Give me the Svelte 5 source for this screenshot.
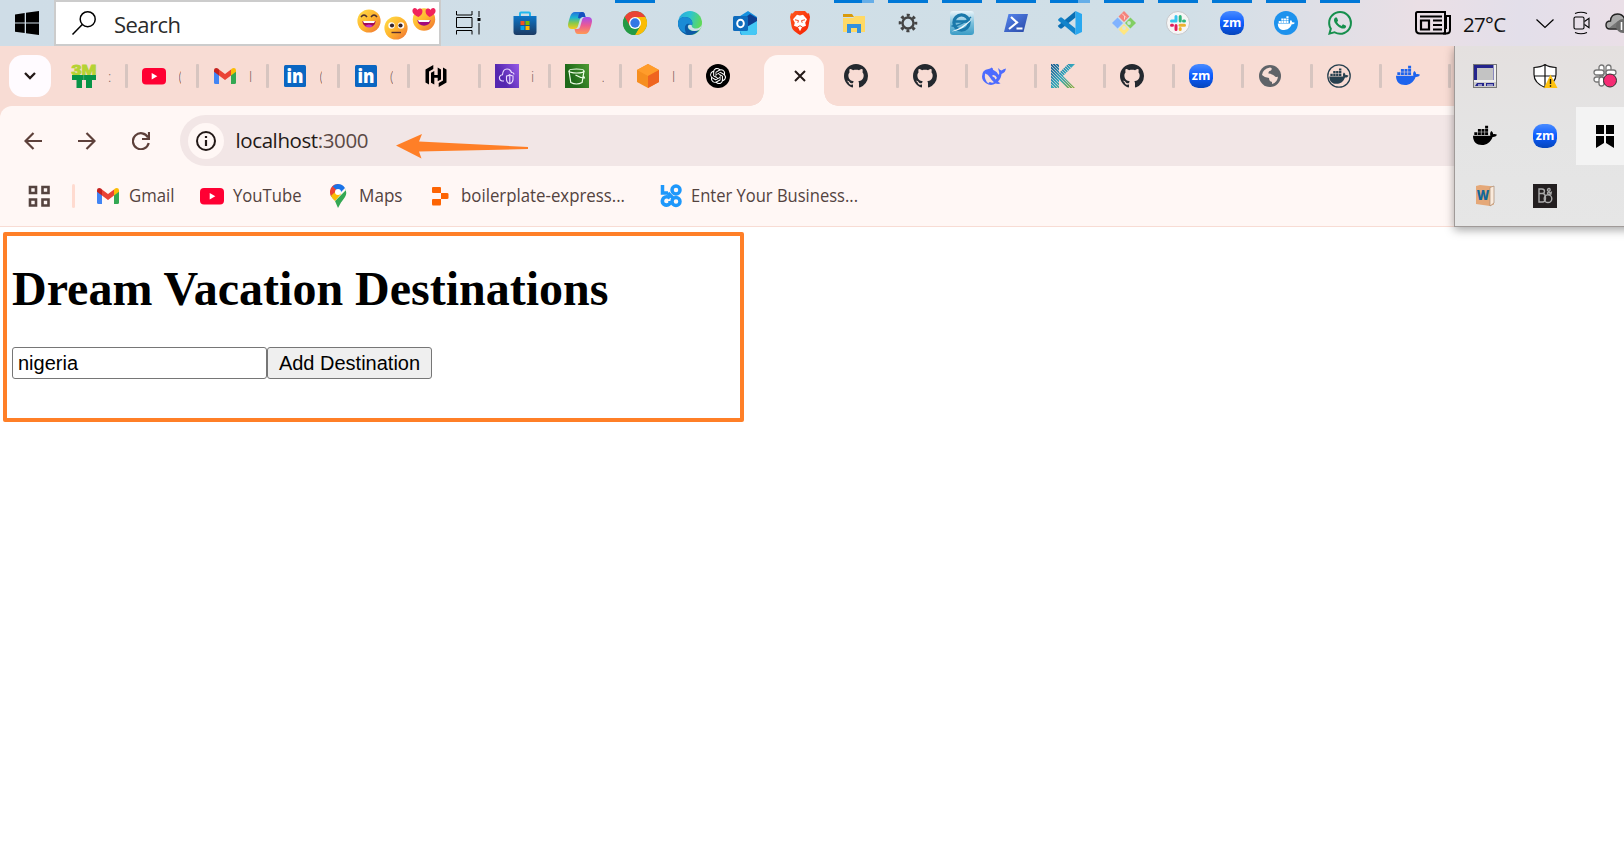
<script>
  const zoom = `<rect width="24" height="24" rx="9.500" fill="url(#zm)"/><text x="12" y="15.800" text-anchor="middle" textLength="18.500" lengthAdjust="spacingAndGlyphs" font-family="Open Sans" font-weight="700" font-size="12.500" fill="#fff">zm</text>`;
  const whale = `<path d="M0 11.8H17.4C16.8 10 17.1 8.2 18.3 7c1.4 1 1.9 2.2 1.8 3.3 1.2-.4 2.8-.2 3.9.5-.8 1.8-2.6 2.3-4.4 2.2C17.5 18.600 13.500 21 9 21 3.500 21 0 18 0 11.800z"/><path d="M1.300 8.300h3v2.800h-3zM4.900 8.300h3v2.800h-3zM8.500 8.300h3v2.800h-3zM12.100 8.300h3v2.800h-3zM4.900 5h3v2.700h-3zM8.500 5h3v2.700h-3zM12.100 5h3v2.700h-3zM12.100 1.800h3v2.600h-3z"/>`;
  const linkedin = `<rect x="1" y="1" width="22" height="22" rx="1.500" fill="#0a66c2"/><text x="12" y="19" text-anchor="middle" textLength="17" lengthAdjust="spacingAndGlyphs" font-family="Open Sans" font-weight="800" font-size="18.500" fill="#fff">in</text>`;
  const gmail = `<path d="M1 6.500V18.500q0 1.500 1.500 1.500H6V10.200z" fill="#4285f4"/><path d="M23 6.500V18.500q0 1.500-1.500 1.500H18V10.200z" fill="#34a853"/><path d="M6 5.400 12 10l6-4.600v6L12 16 6 11.400z" fill="#ea4335"/><path d="M1 6.500C1 3.800 3.500 3.400 5 4.600l1 .8v6L1 7.700z" fill="#c5221f"/><path d="M23 6.500c0-2.700-2.500-3.100-4-1.900l-1 .8v6l5-3.700z" fill="#fbbc04"/>`;
  const youtube = `<rect x="0" y="4" width="24" height="16.500" rx="4" fill="#ff0033"/><path d="M9.700 9v6.500L15.300 12.200z" fill="#fff"/>`;
  const github = `<path transform="scale(1.5)" fill="#24292f" d="M8 0C3.58 0 0 3.58 0 8c0 3.54 2.29 6.53 5.47 7.59.4.07.55-.17.55-.38 0-.19-.01-.82-.01-1.49-2.01.37-2.53-.49-2.69-.94-.09-.23-.48-.94-.82-1.13-.28-.15-.68-.52-.01-.53.63-.01 1.08.58 1.23.82.72 1.21 1.87.87 2.33.66.07-.52.28-.87.51-1.07-1.78-.2-3.64-.89-3.64-3.95 0-.87.31-1.59.82-2.15-.08-.2-.36-1.02.08-2.12 0 0 .67-.21 2.2.82.64-.18 1.32-.27 2-.27s1.36.09 2 .27c1.53-1.04 2.2-.82 2.2-.82.44 1.1.16 1.92.08 2.12.51.56.82 1.27.82 2.15 0 3.07-1.87 3.75-3.65 3.95.29.25.54.73.54 1.48 0 1.07-.01 1.93-.01 2.2 0 .21.15.46.55.38A8.01 8.01 0 0 0 16 8c0-4.42-3.58-8-8-8z"/>`;

  const icons = {
    zoom, linkedin, gmail, youtube, github,
    windows: `<path d="M0 3.400 9.700 2v9.500H0zM11 1.800 24 0v11.500H11zM0 12.600h9.700V22L0 20.700zM11 12.600h13V24l-13-1.800z"/>`,
    search: `<g fill="none" stroke="#000" stroke-width="1.500"><circle cx="15.700" cy="8.200" r="7.500"/><path d="M10.300 13.600.5 23.600"/></g>`,
    taskview: `<g fill="none" stroke="#000"><path d="M.5 0v4H16V0M.5 23.500v-4H16v4M.5 6.500H16v10H.5zM23 0v6M23 12v11.500"/></g><path d="M21.500 7h3v3h-3z"/>`,
    laugh: `<circle cx="12" cy="12" r="11.600" fill="url(#face)"/><path d="M5.500 12h13c0 8-13 8-13 0z" fill="#a30a55"/><path d="M6 12h12l-1 2H7z" fill="#fff"/><path d="M8 17q4-3 8 0-4 3-8 0" fill="#c932c5"/><path d="M4 8q3-4 6 0M14 8q3-4 6 0" fill="none" stroke="#4d3030" stroke-width="1.500"/>`,
    neutral: `<circle cx="12" cy="12" r="11.600" fill="url(#face)"/><circle cx="7.500" cy="9.500" r="3.200" fill="#fff"/><circle cx="17" cy="9.500" r="3.200" fill="#fff"/><circle cx="8" cy="9.500" r="2.100" fill="#38252b"/><circle cx="16.500" cy="9.500" r="2.100" fill="#38252b"/><path d="M7.500 16.500h9.500" stroke="#5a2f2f" stroke-width="1.400"/>`,
    hearts: `<circle cx="12" cy="12.500" r="11.200" fill="url(#face)"/><path d="M5.500 13h13c0 7.500-13 7.500-13 0z" fill="#a30a7c"/><path d="M6 13h12l-1 2H7z" fill="#fff"/><path d="M6.500 10C0 7 0 4 .8 2.200c1.600-2 4-1 4.500.8 1.200-2 4-2 5 0C11 6 9.500 8 6.500 10zM17.500 10c-3-2-4.500-4-3.800-7 1-2 3.800-2 5 0 .5-1.800 3-2.800 4.500-.8C24 4 24 7 17.500 10z" fill="#f0245c"/>`,
    store: `<path d="M7 6V2.500Q7 1.500 8 1.500h8q1 0 1 1V6" fill="none" stroke="#22b8ee" stroke-width="2"/><path d="M.5 5h23v16q0 3-3 3h-17q-3 0-3-3z" fill="url(#store)"/><path d="M7.500 10h4v4h-4z" fill="#f25022"/><path d="M12.500 10h4v4h-4z" fill="#7fba00"/><path d="M7.500 15h4v4h-4z" fill="#00a4ef"/><path d="M12.500 15h4v4h-4z" fill="#ffb900"/>`,
    copilot: `<path d="M7 1h7q2.500 0 3 3l.5 2h-3q-2 0-2.700 2.500L10 15q-.8 3-3.500 3H4q-4 0-4-4 0-2 2-8Q3.500 1 7 1z" fill="url(#copa)"/><path d="M17 23h-7q-2.500 0-3-3l-.5-2h3q2 0 2.700-2.500L14 9q.8-3 3.500-3H20q4 0 4 4 0 2-2 8-1.500 5-5 5z" fill="url(#copb)"/><path d="M14 1q2.500 0 3 3l.5 2h-3q-2 0-2.400 1.500L10 7q.5-6 4-6z" fill="#154fc0"/>`,
    chrome: `<circle cx="12" cy="12" r="12" fill="#34a853"/><path d="M12 12 1.600 6A12 12 0 0 1 22.400 6z" fill="#ea4335"/><path d="M12 6h10.400A12 12 0 0 1 12 24l5.200-9z" fill="#fbbc04"/><path d="M1.600 6 6.800 15 12 12V6z" fill="#ea4335"/><path d="M1.600 6A12 12 0 0 0 12 24l5.200-9H6.800z" fill="#249a45"/><circle cx="12" cy="12" r="6" fill="#fff"/><circle cx="12" cy="12" r="4.700" fill="#3478e5"/>`,
    edge: `<circle cx="12" cy="12" r="12" fill="url(#edge)"/><path d="M0 12C1 6.500 6 5 10 6.500c4 1.500 5 5 4 8-2-2-4-1-4.200 1 0 3.500 4.500 6 11.200 3.500C17 25 9 25.500 4.500 21.500 1 18.500 0 15 0 12z" fill="#0c59a4"/><path d="M0 12C1 6.500 6 5 10 6.500c4 1.500 5 5 4 8-2-2-3.500-2-5-1.500-2 1-3 4-1 9C2 20 0 16 0 12z" fill="#1a8bd5"/><path d="M14 14.500c-.8 1.200.8 3 4 3 3.200 0 5-2 6-4-.3 2-1.500 4.500-3 5.500-5 2-10 .5-11-3 0-2 2-3 4-1.500z" fill="#d1dee6"/>`,
    outlook: `<path d="M4 7 15 0l9 6v15q0 3-3 3H9q-2 0-2-3z" fill="#1490df"/><path d="m10 8 7-5 7 4v5l-8 4z" fill="#103f91"/><path d="m7 20 17-10v11q0 3-3 3H9z" fill="#45c8f5"/><rect y="5" width="15" height="15" rx="1.500" fill="#0f6cbd"/><ellipse cx="7.500" cy="12.500" rx="3.300" ry="3.700" fill="none" stroke="#fff" stroke-width="2"/>`,
    brave: `<path d="M7 0h10l2.500 2.500 1.500-.3L22 6l-1.500 9c-.7 4-2.500 5-8.500 9-6-4-7.800-5-8.500-9L2 6l1-3.800 1.500.3z" fill="url(#brave)"/><path d="M12 4.500 9 3.800 5 8.200l1.800 3.500-.8 3 4 1.500 2 4 2-4 4-1.500-.8-3L19 8.200l-4-4.400z" fill="#fff"/><path d="m7 8.800 3.500.8-.7 2.200M17 8.800l-3.500.8.7 2.200M9.500 16l2.500-1.300 2.500 1.300" fill="none" stroke="#f04b23" stroke-width="1"/>`,
    folder: `<path d="M1 3h9l2 3H1z" fill="#d99a0b"/><path d="M1 7h10l2-2h10v16H1z" fill="#ffd965"/><path d="M5 13h14v9h-4v-5H9v5H5z" fill="#3391de"/>`,
    settings: `<g fill="none" stroke="#444"><circle cx="12" cy="12" r="5.500" stroke-width="2.400"/><circle cx="12" cy="12" r="7.800" stroke-width="3" stroke-dasharray="3 3.126" stroke-dashoffset="1.500"/></g>`,
    eapp: `<rect width="24" height="24" rx="3" fill="url(#eapp)"/><circle cx="11.500" cy="11.500" r="7.600" fill="none" stroke="#1a79ab" stroke-width="3.200"/><path d="M4 10.500h14" stroke="#1a79ab" stroke-width="2.600"/><path d="M1.500 15q9 .5 19.500-9" stroke="#1a79ab" stroke-width="1.500" fill="none"/><path d="M1.500 20.500Q12 17 22 7.500q-2 4-6.500 7-5 5-14 6z" fill="#f2fafd"/>`,
    powershell: `<path d="M4.500 3H24l-4.500 18H0z" fill="url(#psh)"/><path d="m7 6 6 5.500L5 18M12.500 17.500h6" fill="none" stroke="#fff" stroke-width="2.200"/>`,
    vscode: `<path d="M17.500 0v6.500L4 17.300q-1 .8-2 0L.5 16q-1-.9 0-1.800z" fill="#0a6fb4"/><path d="M17.500 24v-6.500L4 6.700q-1-.8-2 0L.5 8q-1 .9 0 1.800z" fill="#1284cb"/><path d="M17.500 0 24 3v18l-6.500 3z" fill="#29a8f0"/>`,
    git: `<path d="m12 0 5.300 5.500-5.300 5.500L6.500 5.500z" fill="#f5837c"/><path d="m5.600 6.500 5.400 5.500-5.400 5.500L0 12z" fill="#80b3ff"/><path d="M18.400 6.500 24 12l-5.600 5.500L13 12z" fill="#82cf63"/><path d="m12 13 5.300 5.500L12 24l-5.500-5.500z" fill="#ffe680"/><path d="m10 2.500 4 4M12.500 8.500V5" stroke="#fbd5cf" fill="none"/><circle cx="17" cy="12" r="1.900" fill="#cde5d5"/><circle cx="12" cy="17" r="1.900" fill="#dde6d8"/>`,
    slack: `<circle cx="12" cy="12" r="11.500" fill="#f6f6f6" stroke="#c5c7ca"/><g stroke-width="3" stroke-linecap="round"><path d="M10 5.500v4M5.500 10H10" stroke="#36c5f0"/><path d="M14.200 5.500V10M18.500 10h-1" stroke="#2eb67d"/><path d="M14 14.200h4.500M14.200 18.500v-1" stroke="#ecb22e"/><path d="M10 14.500v4M5.500 14.200h1" stroke="#e01e5a"/></g>`,
    dockerapp: `<circle cx="12" cy="12" r="12" fill="#1d92ed"/><g transform="translate(3.800 4) scale(.71)" fill="#fff">${whale}</g>`,
    whatsapp: `<path fill="#168f4d" d="M17.472 14.382c-.297-.149-1.758-.867-2.03-.967-.273-.099-.471-.148-.67.15-.197.297-.767.966-.94 1.164-.173.199-.347.223-.644.075-.297-.15-1.255-.463-2.39-1.475-.883-.788-1.48-1.761-1.653-2.059-.173-.297-.018-.458.13-.606.134-.133.298-.347.446-.52.149-.174.198-.298.298-.497.099-.198.05-.371-.025-.52-.075-.149-.669-1.612-.916-2.207-.242-.579-.487-.5-.669-.51-.173-.008-.371-.01-.57-.01-.198 0-.52.074-.792.372-.272.297-1.04 1.016-1.04 2.479 0 1.462 1.065 2.875 1.213 3.074.149.198 2.096 3.2 5.077 4.487.709.306 1.262.489 1.694.625.712.227 1.36.195 1.871.118.571-.085 1.758-.719 2.006-1.413.248-.694.248-1.289.173-1.413-.074-.124-.272-.198-.57-.347m-5.421 7.403h-.004a9.87 9.87 0 01-5.031-1.378l-.361-.214-3.741.982.998-3.648-.235-.374a9.86 9.86 0 01-1.51-5.26c.001-5.45 4.436-9.884 9.888-9.884 2.64 0 5.122 1.03 6.988 2.898a9.825 9.825 0 012.893 6.994c-.003 5.45-4.437 9.884-9.885 9.884m8.413-18.297A11.815 11.815 0 0012.05 0C5.495 0 .16 5.335.157 11.892c0 2.096.547 4.142 1.588 5.945L.057 24l6.305-1.654a11.882 11.882 0 005.683 1.448h.005c6.554 0 11.89-5.335 11.893-11.893a11.821 11.821 0 00-3.48-8.413z"/>`,
    news: `<path d="M1 2.500q0-1.500 1.500-1.500H30v21.500H5q-4 0-4-4z" fill="none" stroke="#000" stroke-width="2"/><path d="M31 5h4v14q0 3.500-4 3.500h-3M31 5v13" fill="none" stroke="#000" stroke-width="2"/><path d="M6 9.500h8v9H6z" fill="none" stroke="#000" stroke-width="2.200"/><path d="M5 5.500h22M18 9.500h9M18 14h9M18 18.500h9" stroke="#000" stroke-width="2"/>`,
    chevron: `<path d="m.5.500 8.500 8 8.500-8" fill="none" stroke="#000" stroke-width="1.200"/>`,
    camera: `<g fill="none" stroke="#000" stroke-width="1.100"><rect x="1" y="5" width="10" height="12" rx="1.500"/><path d="m11.500 9.500 4.500-3.200v9.400l-4.500-3.200M2 1.500q6-2.500 12 0M2 20.500q6 2.500 12 0"/></g>`,
    cloud: `<path d="M5 17q-4 0-4-4t4.500-4Q6 2 12.500 2 18 2 19.500 7q5 0 5 5t-4 5z" fill="#aaa" stroke="#222" stroke-width="1.400"/><path d="M4 16 13 9l8 7z" fill="#777"/><circle cx="18" cy="14" r="7" fill="#6c6c6c"/><path d="M16.500 10v8M20 10v8" stroke="#fff" stroke-width="1.600"/>`,
    mtt: `<text x="12" y="10.500" text-anchor="middle" textLength="25" lengthAdjust="spacingAndGlyphs" font-family="Liberation Sans" font-weight="700" font-size="14.500" fill="#b5d334" stroke="#b5d334">3M</text><path d="M0 11h24v5h-4v8h-6v-8h-4v8H4.500v-8H0z" fill="#079447"/><path d="M11.700 11v5" stroke="#79b887" stroke-width=".6"/>`,
    hashicorp: `<g fill="#000"><path d="M9.300 1 1.500 5.500v13L5 20.500V7.500l4.300-2.600zM14.700 23l7.800-4.500v-13L19 3.500v13l-4.300 2.600z"/><path d="M7 8.800 10.300 7v4h3.400V3.500L17 5.400v10l-3.300 1.800v-3.500h-3.400v6.800L7 18.700z"/></g>`,
    vpc: `<path d="M0 0h24v24H0z" fill="url(#vpc)"/><g fill="none" stroke="#eadcff" stroke-width="1.100"><path d="M9 17H7q-3-.7-2.500-4 .5-2 3-2.300Q8 5 12 5q3.500 0 4.500 3.500 2.500 0 2.500 2"/><path d="M11.500 12q2 0 3.200-1.300Q16 12 18 12v3.500q0 3-3.200 4.200-3.300-1.200-3.300-4.200zM14.800 11v9"/></g>`,
    s3: `<path d="M0 0h24v24H0z" fill="url(#s3)"/><g fill="none" stroke="#efffe8" stroke-width="1.200"><ellipse cx="11.500" cy="7" rx="7.500" ry="2"/><path d="m4 7 1.800 11.500q5.700 3 11.300 0L19 7M10.500 11q5 3 9 3 0-1.500-2-2.300"/></g>`,
    cube: `<path d="m12 0 11 6v12l-11 6L1 18V6z" fill="#f68e1f"/><path d="m12 0 11 6-11 6L1 6z" fill="#ff9c2b"/><path d="m23 6-11 6v12l11-6z" fill="#ef6420"/>`,
    openai: `<circle cx="12" cy="12" r="12"/><path transform="translate(4 4) scale(.67)" fill="#fff" d="M22.2819 9.8211a5.9847 5.9847 0 0 0-.5157-4.9108 6.0462 6.0462 0 0 0-6.5098-2.9A6.0651 6.0651 0 0 0 4.9807 4.1818a5.9847 5.9847 0 0 0-3.9977 2.9 6.0462 6.0462 0 0 0 .7427 7.0966 5.98 5.98 0 0 0 .511 4.9107 6.051 6.051 0 0 0 6.5146 2.9001A5.9847 5.9847 0 0 0 13.2599 24a6.0557 6.0557 0 0 0 5.7718-4.2058 5.9894 5.9894 0 0 0 3.9977-2.9001 6.0557 6.0557 0 0 0-.7475-7.0729zm-9.022 12.6081a4.4755 4.4755 0 0 1-2.8764-1.0408l.1419-.0804 4.7783-2.7582a.7948.7948 0 0 0 .3927-.6813v-6.7369l2.02 1.1686a.071.071 0 0 1 .038.052v5.5826a4.504 4.504 0 0 1-4.4945 4.4944zm-9.6607-4.1254a4.4708 4.4708 0 0 1-.5346-3.0137l.142.0852 4.783 2.7582a.7712.7712 0 0 0 .7806 0l5.8428-3.3685v2.3324a.0804.0804 0 0 1-.0332.0615L9.74 19.9502a4.4992 4.4992 0 0 1-6.1408-1.6464zM2.3408 7.8956a4.485 4.485 0 0 1 2.3655-1.9728V11.6a.7664.7664 0 0 0 .3879.6765l5.8144 3.3543-2.0201 1.1685a.0757.0757 0 0 1-.071 0l-4.8303-2.7865A4.504 4.504 0 0 1 2.3408 7.872zm16.5963 3.8558L13.1038 8.364 15.1192 7.2a.0757.0757 0 0 1 .071 0l4.8303 2.7913a4.4944 4.4944 0 0 1-.6765 8.1042v-5.6772a.79.79 0 0 0-.407-.667zm2.0107-3.0231l-.142-.0852-4.7735-2.7818a.7759.7759 0 0 0-.7854 0L9.409 9.2297V6.8974a.0662.0662 0 0 1 .0284-.0615l4.8303-2.7866a4.4992 4.4992 0 0 1 6.6802 4.66zM8.3065 12.863l-2.02-1.1638a.0804.0804 0 0 1-.038-.0567V6.0742a4.4992 4.4992 0 0 1 7.3757-3.4537l-.142.0805L8.704 5.459a.7948.7948 0 0 0-.3927.6813zm1.0976-2.3654l2.602-1.4998 2.6069 1.4998v2.9994l-2.5974 1.4997-2.6067-1.4997Z"/>`,
    deepseek: `<path d="M0 12.500Q0 5.500 6.500 5q2-.2 3-1.500 2 .8 1.500 2.200 4 1.800 5.500 5Q18 10 16.500 6q-.3-1.300 0-2 1.200 2 3 2.500 2-1.300 4.500-2-.5 4-4.500 5.500-.5 5-3.500 7.500 1 1.300 2.500 1.800-2 1.200-5 .2Q9 22.500 4 19.300 0 16.500 0 12.500z" fill="#4d6bfe"/><path d="M3 9.500q3 .5 5 4 2 3.500 4 4.800-2 1-4-.3-1.500 0-1.500 1.500Q2 16 3 9.500zM10.500 11q3-.5 4.500 3l-1.500 1.500q-.5-2.500-3-3z" fill="#f7ddd5"/>`,
    kaniko: `<path d="M0 0h8v9l9-9h7L12 12l12 12h-8l-8-8v8H0z" fill="url(#kani)"/><g stroke="#f7ddd5" stroke-width=".9" opacity=".75"><path d="m0 2 22 22M0 5l19 19M0 8l16 16M0 11l13 13M0 14l10 10M0 17l7 7M0 20l4 4M0-1l24 24M3-1l21 21M6-1l18 18M9-1l12 12M12-1l9 9M15-1l6 6"/></g>`,
    globe: `<circle cx="12" cy="12" r="11" fill="#5f6368"/><path d="M12 3.500q3 .5 1 3-3 .5-2.500 3 3 0 5.500 2 2 2.500 4 1-.5 6-6 7.500V18q-3-.5-3-4Q7 14 4 11q.5-6 8-7.500z" fill="#f7ddd5"/>`,
    dockerhub: `<circle cx="12" cy="12" r="11.200" fill="none" stroke="#27404f" stroke-width="1.300"/><g transform="translate(2.300 3) scale(.8)" fill="#27404f">${whale}</g>`,
    docker: `<g fill="#1d63ed">${whale}</g>`,
    dockertray: `<g fill="#000">${whale}</g>`,
    monitor: `<path d="M0 0h24v24H0z" fill="#777"/><path d="M1 1h20v15H1z" fill="#24248c"/><path d="M4 4h16v12H4z" fill="#c3c3c3"/><path d="M20.500 1h2.500v16h-2.500zM1 16h22v2H1z" fill="#eee"/><path d="M1 18h22v5H1z" fill="#ccc"/><path d="m2 22 2-3h7v3zM13 22v-3h8v3z" fill="#24248c"/><path d="M5 21h4M14 21h6" stroke="#fff"/>`,
    shield: `<path d="M12 .6q4 2.700 11 2.900v7Q23 19 12 23.500 1 19 1 10.500v-7Q8 3.300 12 .6zM12 1v22M1 12h22" fill="#fff" stroke="#111" stroke-width="1.200"/><path d="m17.500 10.500 7 13.500H11z" fill="#ffc20e"/><path d="M17.500 15v5M17.500 21.200v1.600" stroke="#111" stroke-width="1.400"/>`,
    slacktray: `<g fill="#fff" stroke="#777" stroke-width="1.300"><rect x="6" y="1" width="5" height="11" rx="2.500"/><rect x="13" y="1" width="5" height="11" rx="2.500"/><rect x="1" y="6" width="10" height="5" rx="2.500"/><rect x="13" y="6" width="10" height="5" rx="2.500"/><rect x="1" y="13" width="10" height="5" rx="2.500"/><rect x="6" y="13" width="5" height="9" rx="2.500"/></g><circle cx="17" cy="16.500" r="6.500" fill="#f52c74" stroke="#333"/>`,
    flag: `<path d="M3 1h8v9H3zM13 1h8v9h-8zM3 12h8v7l-8 5zM13 12h8v12l-8-5z"/>`,
    wbook: `<path d="m3 2 4-1 14 1.500v18L17 22 3 20z" fill="#e5a878"/><path d="m17 3.500 4-1.500v17L17 22z" fill="#faeadb" stroke="#a88974" stroke-width=".7"/><text x="10" y="16" text-anchor="middle" font-family="Open Sans" font-weight="800" font-size="14" textLength="12.500" lengthAdjust="spacingAndGlyphs" fill="#10679a">W</text>`,
    bo: `<path d="M0 0h24v24H0z" fill="#231f20"/><g fill="none" stroke="#aaa" stroke-width="1.400"><path d="M6 5h3q2.500 0 2.500 2.200T9 9.500H6zM6 9.500h3.500q3 0 3 4.500 0 4-3 4H6z"/><circle cx="15" cy="14.700" r="3.800"/><path d="M18.500 10.500 14.500 6.500q0-2 1.500-2t1 2l-2.500 2.500q0 1.500 1.500 1.500 2 0 2.500-3"/></g>`,
    grid: `<path d="M2 2h6v6H2zM14.500 2h6v6h-6zM2 14.500h6v6H2zM14.500 14.500h6v6h-6z" fill="none" stroke="#55433f" stroke-width="2.600"/>`,
    maps: `<path d="M12 0C7.500 0 4 3.500 4 8q0 2.500 1.500 4.700L12 6z" fill="#ea4335"/><path d="M6.500 2.500Q8.500 0 12 0q4.500 0 7 4l-5 5-4-3z" fill="#1a73e8"/><path d="M4.200 10Q4.500 12 9 17L20 6l-1-2q2.500 5 0 9-2 3-4 5.500L12 24l-3-7z" fill="#34a853"/><path d="M12 6 4.700 11.500Q6 14 9 17l6-7z" fill="#fbbc04"/><path d="m4 8 2.500-5.500L10 5.500 5 12z" fill="#ea4335"/><circle cx="12" cy="8" r="3" fill="#fff"/>`,
    replit: `<path d="M4 3h7q1 0 1 1v5H4q-1 0-1-1V4q0-1 1-1zM12 9h6q1.500 0 1.500 1v4q0 1-1.500 1h-6zM3 16q0-1 1-1h8v5q0 1.500-1 1.500H4q-1 0-1-1.500z" fill="#fd6403"/>`,
    logo: `<g fill="none" stroke="#1e98fb" stroke-width="3.500"><path d="M3.500 1v8H9"/><circle cx="17" cy="6" r="4"/><circle cx="17" cy="17.500" r="4"/><path d="M11 14q-3.500-2.500-6.500 0-2.500 3.500 0 6 3.500 2.500 6.500-.5v-2.500M9 9l6 6"/></g>`
  };

  const apps = [
    { icon: 'store' }, { icon: 'copilot' }, { icon: 'chrome', open: true }, { icon: 'edge' },
    { icon: 'outlook' }, { icon: 'brave' }, { icon: 'folder', open: true, many: true },
    { icon: 'settings', open: true }, { icon: 'eapp', open: true }, { icon: 'powershell', open: true },
    { icon: 'vscode', open: true, many: true }, { icon: 'git', open: true }, { icon: 'slack', open: true },
    { icon: 'zoom', open: true }, { icon: 'dockerapp', open: true }, { icon: 'whatsapp', open: true }
  ];
  const tabsBefore = [
    ['mtt', ':'], ['youtube', '('], ['gmail', 'l'], ['linkedin', '('], ['linkedin', '('],
    ['hashicorp', ''], ['vpc', 'i'], ['s3', '.'], ['cube', 'l'], ['openai', '']
  ];
  const tabsAfter = ['github', 'github', 'deepseek', 'kaniko', 'github', 'zoom', 'globe', 'dockerhub', 'docker', ''];
  const bookmarks = [
    { icon: 'gmail', label: 'Gmail', w: 104, gap: 9, fit: 45.5 },
    { icon: 'youtube', label: 'YouTube', w: 125.5, gap: 8.5, fit: 68.5 },
    { icon: 'maps', label: 'Maps', w: 103.5, gap: 9, fit: 43.5 },
    { icon: 'replit', label: 'boilerplate-express...', w: 230, gap: 8, fit: 164 },
    { icon: 'logo', label: 'Enter Your Business...', w: 200, gap: 8, fit: 167 }
  ];
  const tray = ['monitor', 'shield', 'slacktray', 'dockertray', 'zoom', 'flag', 'wbook', 'bo'];
  let destination = $state('nigeria');
</script>

{#snippet icon(name, w = 24, h = 24)}
  <svg class="icon" width={w} height={h} viewBox="0 0 {w} {h}">{@html icons[name] ?? ''}</svg>
{/snippet}

{#snippet gradient(id, stops, x2 = 1, y2 = 1)}
  <linearGradient {id} {x2} {y2}>
    {#each stops as color, i}<stop offset={i / (stops.length - 1)} stop-color={color} />{/each}
  </linearGradient>
{/snippet}

<svg class="defs" width="0" height="0">
  <defs>
    {@render gradient('zm', ['#4a8cff', '#0b5cff', '#0645ba'], 0, 1)}
    {@render gradient('face', ['#ffe04a', '#ffb52e', '#ee6f35'])}
    {@render gradient('store', ['#0d76c8', '#1b3a63'], 0, 1)}
    {@render gradient('copa', ['#2470dc', '#1cb4d0', '#8fca45', '#f5ca20'], 0, 1)}
    {@render gradient('copb', ['#a44cf0', '#ec5b92', '#ff9a53'], 0, 1)}
    {@render gradient('edge', ['#2aa5df', '#2dc3d2', '#5fd95a'], 1, 0.3)}
    {@render gradient('brave', ['#ff5a1f', '#f51d00'])}
    {@render gradient('eapp', ['#eaf5fa', '#7cc0dc', '#3a9cc6'], 0, 1)}
    {@render gradient('psh', ['#5586f0', '#2949a5'])}
    {@render gradient('vpc', ['#5527b0', '#a667f5'], 1, -0.5)}
    {@render gradient('s3', ['#1f6a1a', '#5ca83a'], 1, -0.5)}
    {@render gradient('kani', ['#1c5d92', '#36a9bf', '#8fae38'])}
  </defs>
</svg>

<div class="screen">
  <header class="taskbar">
    <div class="start">{@render icon('windows')}</div>
    <div class="search">
      {@render icon('search')}
      <span class="search-label">Search</span>
      <div class="faces">
        <div>{@render icon('laugh')}</div>
        <div class="low">{@render icon('neutral')}</div>
        <div class="high">{@render icon('hearts')}</div>
      </div>
    </div>
    <div class="taskview">{@render icon('taskview', 25, 24)}</div>
    <nav class="apps">
      {#each apps as app}
        <div class="app">
          {#if app.open}<i class="bar" class:many={app.many}></i>{/if}
          {@render icon(app.icon)}
        </div>
      {/each}
    </nav>
    <div class="status">
      {@render icon('news', 36, 24)}
      <span class="temp">27°C</span>
      {@render icon('chevron', 18, 9)}
      <div class="cam">{@render icon('camera', 17, 22)}</div>
      <div class="cloud">{@render icon('cloud', 26, 22)}</div>
    </div>
  </header>

  <div class="tabs">
    <div class="tab-menu">
      <svg width="12" height="8" viewBox="0 0 12 8"><path d="m1 1 5 5 5-5" fill="none" stroke="#231917" stroke-width="2.300" /></svg>
    </div>
    <div class="before">
      {#each tabsBefore as [name, text]}
        <div class="tab"><i class="sep"></i>{@render icon(name)}<span class="clip">{text}</span></div>
      {/each}
    </div>
    <div class="active">
      <svg width="12" height="12" viewBox="0 0 12 12"><path d="m1 1 10 10M11 1 1 11" stroke="#231917" stroke-width="2" /></svg>
    </div>
    <div class="after">
      {#each tabsAfter as name}
        <div class="tab"><i class="sep"></i>{@render icon(name)}</div>
      {/each}
    </div>
  </div>

  <div class="toolbar">
    <div class="nav">
      <div class="tools">
        <svg width="18" height="18" viewBox="0 0 18 18"><path d="M18 9H2M9.500 1 1.500 9l8 8" /></svg>
        <svg width="18" height="18" viewBox="0 0 18 18"><path d="M0 9h16M8.500 1l8 8-8 8" /></svg>
        <svg width="18" height="18" viewBox="0 0 18 18"><path d="M16 5.500A8 8 0 1 0 16.700 11M17 0v7h-7" /></svg>
      </div>
      <div class="omnibox">
        <div class="info">
          <svg width="20" height="20" viewBox="0 0 20 20"><circle cx="10" cy="10" r="9" fill="none" stroke="#231917" stroke-width="2" /><path d="M10 9v6M10 5v2" stroke="#231917" stroke-width="2.200" /></svg>
        </div>
        <span class="url">localhost<span class="port">:3000</span></span>
      </div>
    </div>
    <div class="bookmarks">
      <div class="allapps">{@render icon('grid', 23, 23)}</div>
      <i class="divider"></i>
      {#each bookmarks as b}
        <div class="bookmark" style:width="{b.w}px" style:gap="{b.gap}px">
          {@render icon(b.icon)}
          <svg class="label" width={b.fit} height="26"><text x="0" y="19" textLength={b.fit} lengthAdjust="spacingAndGlyphs">{b.label}</text></svg>
        </div>
      {/each}
    </div>
  </div>

  <main>
    <h1>Dream Vacation Destinations</h1>
    <form onsubmit={(e) => e.preventDefault()}>
      <input type="text" bind:value={destination} /><button>Add Destination</button>
    </form>
  </main>

  <div class="outline"></div>
  <svg class="arrow" width="133" height="26" viewBox="0 0 133 26"><path d="M0 12.500 26 1l-3 7.500 109 5.500v2L23 18.500l2.500 7z" fill="#ff7f27" /></svg>

  <aside class="tray">
    {#each tray as name}
      <div class="cell" class:hover={name === 'flag'}>{@render icon(name)}</div>
    {/each}
  </aside>
</div>

<style>
  :global(body) { margin: 0; background: #fff; }
  .defs { position: absolute; }
  .screen { position: relative; width: 1624px; height: 859px; overflow: hidden; background: #fff; font-family: "Open Sans", sans-serif; }
  .screen svg { display: block; flex: none; }
  .icon { overflow: visible; }

  .taskbar { display: flex; height: 46px; background: linear-gradient(90deg, #cfdde7 0, #d0dfe7 1180px, #dfdfe6 1320px, #eadfe5 1420px, #e3dfea 1520px, #eadfe7 1624px); }
  .start { width: 54px; flex: none; display: flex; align-items: center; justify-content: center; }
  .search { box-sizing: border-box; width: 387px; flex: none; border: 2px solid #ccc; background: #fff; display: flex; align-items: center; padding-left: 16px; }
  .search-label { margin-left: 18px; font-size: 22px; letter-spacing: -0.55px; color: #2b2b2b; line-height: 30px; width: 242.500px; padding-top: 1px; flex: none; }
  .faces { display: flex; gap: 3.500px; margin-top: 3px; }
  .low { margin-top: 7px; }
  .high { margin-top: -2px; }
  .taskview { width: 57px; display: flex; align-items: center; padding-left: 15px; box-sizing: border-box; flex: none; }
  .apps { display: flex; flex: none; }
  .app { position: relative; width: 54px; display: flex; align-items: center; justify-content: center; }
  .app:nth-child(-n + 6) { width: 54.830px; }
  .bar { position: absolute; top: 0; left: 7px; width: 40px; height: 3px; background: #0078d7; }
  .bar.many { background: linear-gradient(90deg, #0078d7 28px, #66aee8 28px); }
  .status { display: flex; align-items: center; padding-left: 24px; margin-left: 24px; flex: none; }
  .temp { margin: 2px 0 0 12px; width: 73px; font-size: 20.500px; letter-spacing: -0.65px; line-height: 28px; color: #111; font-variant-ligatures: none; }
  .cam { margin-left: 19px; }
  .cloud { margin-left: 15px; }

  .tabs { display: flex; height: 60px; background: #f8dcd4; }
  .tab-menu { width: 42px; height: 42px; margin: 9px 3.500px 0 9px; border-radius: 14px; background: #fffbff; display: flex; align-items: center; justify-content: center; flex: none; }
  .before, .after { display: flex; padding-top: 18px; }
  .tab { display: flex; width: 70.500px; height: 24px; flex: none; }
  .sep { width: 3px; height: 24px; background: #d7c5c0; margin-right: 14px; flex: none; border-radius: 1px; }
  .before .tab:first-child .sep, .after .tab:first-child .sep { background: none; }
  .after .tab { width: 69px; }
  .clip { margin-left: 12.500px; width: 2.500px; overflow: hidden; font-size: 14px; line-height: 26px; color: #7a605a; font-weight: 300; }
  .active { position: relative; width: 60px; height: 51px; margin: 9px 3px 0 4.500px; border-radius: 14px 14px 0 0; background: #fff7f5; display: flex; flex: none; justify-content: center; padding-top: 15px; padding-left: 12px; box-sizing: border-box; }
  .active::before, .active::after { content: ""; position: absolute; bottom: 0; width: 14px; height: 14px; background: radial-gradient(circle at 0 0, transparent 13.500px, #fff7f5 14px); }
  .active::before { left: -14px; }
  .active::after { right: -14px; transform: scaleX(-1); }

  .toolbar { height: 120px; background: #fff7f5; border-radius: 12px 0 0 0; border-bottom: 1px solid #f8dcd4; box-shadow: -12px -12px 0 12px #f8dcd4; clip-path: inset(0); }
  .nav { display: flex; padding-top: 9px; }
  .tools { display: flex; width: 156px; padding-left: 24px; gap: 36px; align-items: center; }
  .tools path { fill: none; stroke: #5d403a; stroke-width: 2.200; }
  .omnibox { flex: 1; height: 51px; border-radius: 26px 0 0 26px; background: #f2e6e6; display: flex; align-items: center; padding-left: 8px; }
  .info { width: 36px; height: 36px; border-radius: 50%; background: #fff7f5; display: flex; align-items: center; justify-content: center; }
  .url { margin-left: 11.500px; font-size: 20.500px; letter-spacing: -0.400px; color: #231917; line-height: 28px; margin-top: -2px; }
  .port { color: #5b4945; }
  .bookmarks { display: flex; align-items: center; height: 60px; }
  .allapps { padding-left: 27.500px; width: 44.500px; }
  .divider { width: 3px; height: 24px; border-radius: 2px; background: #ffdbd0; margin-right: 21px; }
  .bookmark { display: flex; align-items: center; }
  .label { overflow: visible; }
  .label text { font-size: 17.500px; fill: #53433f; }

  main { padding: 34px 12px 0; }
  h1 { margin: 0; font: 700 48px/55px "Liberation Serif", serif; color: #000; }
  form { display: flex; margin-top: 31px; }
  input, button { box-sizing: border-box; height: 32px; border: 1px solid #767676; border-radius: 3px; font: 20px "Liberation Sans", sans-serif; color: #000; }
  input { width: 255px; padding: 0 5px; background: #fff; }
  button { width: 165px; padding: 0; background: #efefef; white-space: nowrap; }

  .outline { position: absolute; left: 3px; top: 232px; width: 741px; height: 190px; box-sizing: border-box; border: 4px solid #ff7f27; border-radius: 2px; }
  .arrow { position: absolute; left: 396px; top: 133px; }
  .tray { position: absolute; left: 1454px; top: 46px; width: 180px; height: 180px; border-left: 1px solid #a09a98; border-bottom: 1px solid #a09a98; background: linear-gradient(#e4e0df, #e4e4e4 50%, #e6e6e6); box-shadow: 0 3px 9px rgba(0, 0, 0, 0.35); clip-path: inset(0 0 -16px -16px); display: grid; grid-template: repeat(3, 60px) / repeat(3, 60px); }
  .cell { display: flex; align-items: center; justify-content: center; margin: 1px; }
  .hover { background: #f3f3f3; }
</style>
